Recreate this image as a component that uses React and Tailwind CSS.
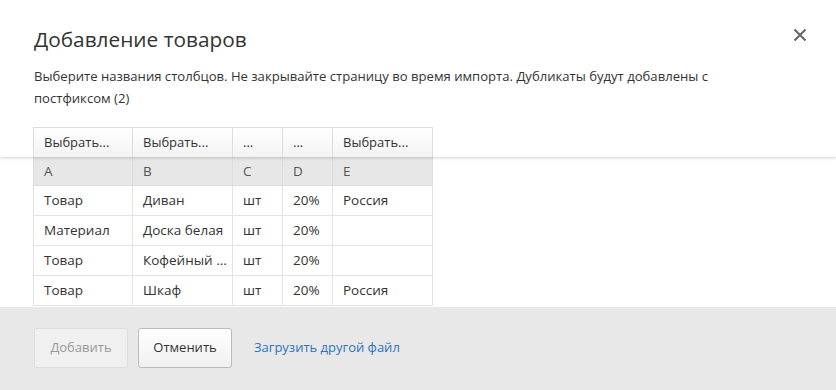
import React from 'react';

const columns = [
  { w: 'w-[100px]', head: 'Выбрать...', letter: 'A' },
  { w: 'w-[100px]', head: 'Выбрать...', letter: 'B' },
  { w: 'w-[50px]', head: '...', letter: 'C' },
  { w: 'w-[50px]', head: '...', letter: 'D' },
  { w: 'w-[100px]', head: 'Выбрать...', letter: 'E' },
];

const rows = [
  ['Товар', 'Диван', 'шт', '20%', 'Россия'],
  ['Материал', 'Доска белая', 'шт', '20%', ''],
  ['Товар', 'Кофейный ...', 'шт', '20%', ''],
  ['Товар', 'Шкаф', 'шт', '20%', 'Россия'],
];

const App = () => {
  return (
    <div className="flex flex-col h-[390px] w-[836px] overflow-hidden bg-white text-[#333] font-['Open_Sans',sans-serif]">
      {/* Header with column pickers */}
      <div className="relative z-10 bg-white shadow-[0_1px_3px_rgba(0,0,0,0.18)] px-[33px] pt-[22px]">
        <div className="flex items-start justify-between">
          <h1 className="text-[20.8px] leading-[34px] font-normal pl-px">Добавление товаров</h1>
          <button className="mt-[6px] mr-[-4px] text-[#666]">
            <svg width="14" height="14" viewBox="0 0 14 14" fill="none" stroke="currentColor" strokeWidth="2">
              <path d="M1.5 1.5l11 11M12.5 1.5l-11 11" />
            </svg>
          </button>
        </div>
        <p className="mt-[9px] pl-px text-[13.1px] leading-[22px] max-w-[740px]">
          Выберите названия столбцов. Не закрывайте страницу во время импорта. Дубликаты будут добавлены с постфиксом (2)
        </p>
        <div className="mt-[18px] flex w-fit">
          {columns.map((c, i) => (
            <div
              key={i}
              className={`${c.w} h-[30px] border-t border-r border-[#ddd] ${i === 0 ? 'border-l' : ''} bg-gradient-to-b from-white to-[#f3f3f3] pl-[10px] pr-[4px] text-[13px] leading-[29px] whitespace-nowrap overflow-hidden`}
            >
              {c.head}
            </div>
          ))}
        </div>
      </div>

      {/* Table body */}
      <div className="flex-1 overflow-hidden px-[33px]">
        <div className="flex w-fit bg-[#e7e7e7]">
          {columns.map((c, i) => (
            <div
              key={i}
              className={`${c.w} h-[29px] border-r border-b border-[#ddd] ${i === 0 ? 'border-l' : ''} pl-[10px] text-[13.5px] leading-[28px] text-[#555]`}
            >
              {c.letter}
            </div>
          ))}
        </div>
        {rows.map((r, ri) => (
          <div key={ri} className="flex w-fit">
            {r.map((cell, ci) => (
              <div
                key={ci}
                className={`${columns[ci].w} h-[30px] border-r border-b border-[#e3e3e3] ${ci === 0 ? 'border-l' : ''} pl-[10px] pr-[3px] text-[13.5px] leading-[29px] whitespace-nowrap overflow-hidden`}
              >
                {cell}
              </div>
            ))}
          </div>
        ))}
      </div>

      {/* Footer */}
      <div className="h-[83px] bg-[#e8e8e8] flex items-center px-[34px] gap-[10px] pb-[2px]">
        <button className="w-[94px] h-[40px] rounded-[3px] border border-[#ddd] bg-[#f0f0f0] text-[13px] text-[#999]">
          Добавить
        </button>
        <button className="w-[94px] h-[40px] rounded-[3px] border border-[#bbb] bg-gradient-to-b from-white to-[#f0f0f0] text-[13px] text-[#333]">
          Отменить
        </button>
        <a className="ml-[12px] text-[13px] text-[#2e74c0]">Загрузить другой файл</a>
      </div>
    </div>
  );
};

export default App;
